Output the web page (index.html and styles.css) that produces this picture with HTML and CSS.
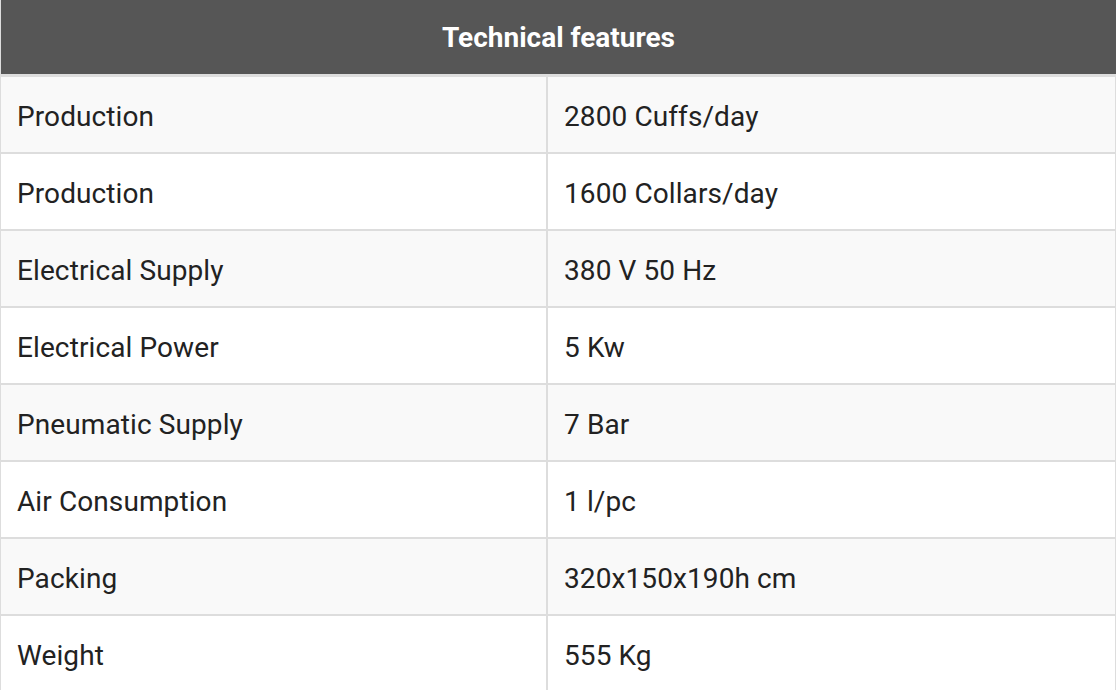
FILE: index.html
```html
<!DOCTYPE html>
<html lang="en">
<head>
<meta charset="utf-8">
<title>Technical features</title>
<link rel="stylesheet" href="styles.css">
</head>
<body>
<table class="spec">
  <colgroup>
    <col class="col-label">
    <col class="col-value">
  </colgroup>
  <thead>
    <tr><th colspan="2" class="spec-head">Technical features</th></tr>
  </thead>
  <tbody>
    <tr><td>Production</td><td>2800 Cuffs/day</td></tr>
    <tr><td>Production</td><td>1600 Collars/day</td></tr>
    <tr><td>Electrical Supply</td><td>380 V 50 Hz</td></tr>
    <tr><td>Electrical Power</td><td>5 Kw</td></tr>
    <tr><td>Pneumatic Supply</td><td>7 Bar</td></tr>
    <tr><td>Air Consumption</td><td>1 l/pc</td></tr>
    <tr><td>Packing</td><td>320x150x190h cm</td></tr>
    <tr><td>Weight</td><td>555 Kg</td></tr>
  </tbody>
</table>
</body>
</html>
```
FILE: styles.css
```css
html, body {
  margin: 0;
  padding: 0;
  background: #ffffff;
}
body {
  font-family: Roboto, "Liberation Sans", sans-serif;
  color: #222222;
}
.spec {
  width: 1118px;
  border-collapse: collapse;
  table-layout: fixed;
  margin-left: -1px;
}
.col-label {
  width: 547px;
}
.spec-head {
  height: 74px;
  padding: 0;
  background: #565656;
  color: #ffffff;
  font-size: 28px;
  font-weight: 700;
  text-align: center;
  border-bottom: 3px solid #dddddd;
  border-left: 2px solid #dddddd;
  letter-spacing: 0;
}
.spec td {
  height: 72px;
  padding: 3px 0 0 16px;
  border: 2px solid #dddddd;
  font-size: 28px;
  font-weight: 400;
  vertical-align: middle;
  letter-spacing: 0.1px;
}
.spec tbody tr:nth-child(odd) td {
  background: #f9f9f9;
}
```
